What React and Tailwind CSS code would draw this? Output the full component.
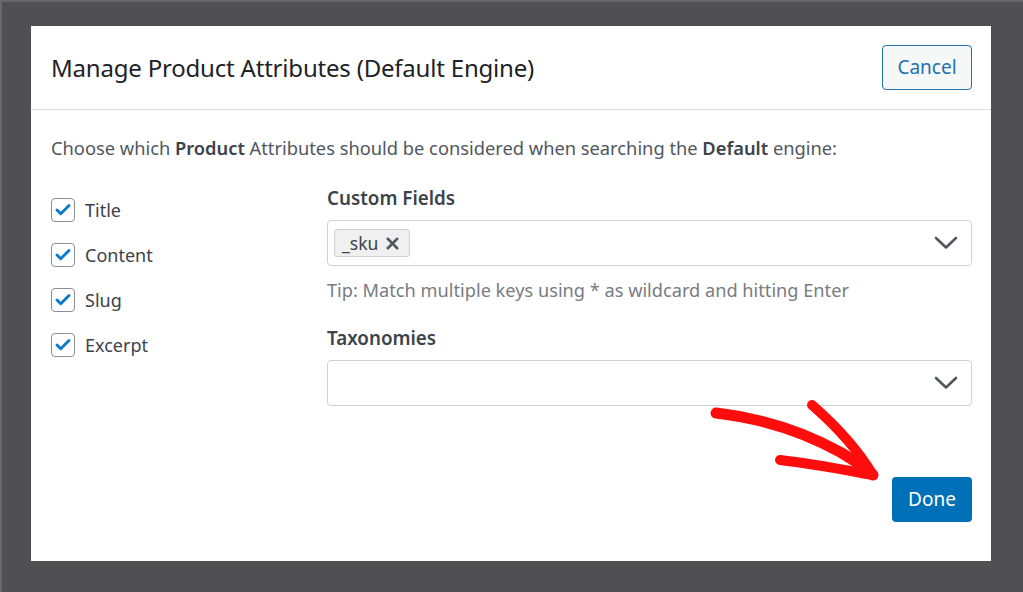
import { Check, X } from "lucide-react";

const fields = ["Title", "Content", "Slug", "Excerpt"];

function Chevron() {
  return (
    <svg width="24" height="14" viewBox="0 0 24 14" className="mr-[13px]">
      <path d="M2 2 L12 11.5 L22 2" fill="none" stroke="#50575e" strokeWidth="2.6" strokeLinecap="round" strokeLinejoin="round" />
    </svg>
  );
}

function Box(props) {
  return (
    <div className="h-[46px] rounded-[4px] border border-[#d0d1d3] bg-white flex items-center justify-between pl-[6px]">
      <div className="flex items-center">{props.children}</div>
      <Chevron />
    </div>
  );
}

export default function App() {
  return (
    <div className="w-[1023px] h-[592px] bg-[#505053] border-l-2 border-t-2 border-[#68686b] pt-[24px] pl-[29px] font-['Noto_Sans',sans-serif]">
      <div className="relative w-[960px] h-[535px] bg-white">
        {/* header */}
        <div className="h-[84px] flex items-center justify-between pl-[20px] pr-[19px] border-b border-[#dcdcde]">
          <h1 className="text-[24px] text-[#1d2327] tracking-[-0.2px]">Manage Product Attributes (Default Engine)</h1>
          <button className="h-[45px] w-[90px] rounded-[4px] border border-[#2271b1] bg-[#f6f7f7] text-[#2271b1] text-[19px]">Cancel</button>
        </div>

        {/* body */}
        <div className="pl-[20px] pr-[19px] pt-[24px]">
          <p className="text-[18.3px] text-[#50575e] leading-[28px]">
            Choose which <b className="font-semibold text-[#3c434a]">Product</b> Attributes should be considered when searching the <b className="font-semibold text-[#3c434a]">Default</b> engine:
          </p>

          <div className="flex mt-[22px]">
            <div className="w-[276px] flex flex-col gap-[21px] pt-[14px]">
              {fields.map((f) => (
                <label key={f} className="flex items-center gap-[10px] h-[24px]">
                  <span className="w-[24px] h-[24px] rounded-[4px] border border-[#8c8f94] bg-white flex items-center justify-center">
                    <Check size={18} strokeWidth={3.8} color="#0a7acb" />
                  </span>
                  <span className="text-[18px] text-[#3c434a]">{f}</span>
                </label>
              ))}
            </div>

            <div className="flex-1">
              <div className="text-[18.8px] font-semibold text-[#3c434a] leading-[28px]">Custom Fields</div>
              <div className="mt-[8px]">
                <Box>
                  <span className="h-[28px] px-[7px] flex items-center gap-[5px] rounded-[3px] border border-[#d0d1d3] bg-[#f0f0f1] text-[17.5px] text-[#3c434a]">
                    _sku
                    <X size={19} strokeWidth={3.2} color="#50575e" />
                  </span>
                </Box>
              </div>
              <p className="mt-[11px] text-[18.2px] text-[#787c82] leading-[26px]">Tip: Match multiple keys using * as wildcard and hitting Enter</p>
              <div className="mt-[21px] text-[18.8px] font-semibold text-[#3c434a] leading-[28px]">Taxonomies</div>
              <div className="mt-[8px]">
                <Box />
              </div>
              <div className="flex justify-end mt-[71px]">
                <button className="h-[45px] w-[80px] rounded-[4px] bg-[#0071b8] text-white text-[19px]">Done</button>
              </div>
            </div>
          </div>
        </div>

        {/* red annotation arrow */}
        <svg className="absolute left-0 top-0 pointer-events-none" width="960" height="535" viewBox="31 26 960 535">
          <g fill="none" stroke="#ff0d0d" strokeLinecap="round" strokeLinejoin="round">
            <path d="M716 413 C760 418 800 430 840 452 C855 461 866 468 873 475" strokeWidth="11" />
            <path d="M812 405 C835 425 858 450 873 475" strokeWidth="10" />
            <path d="M780 460 C815 464 845 470 873 475" strokeWidth="10" />
          </g>
        </svg>
      </div>
    </div>
  );
}
